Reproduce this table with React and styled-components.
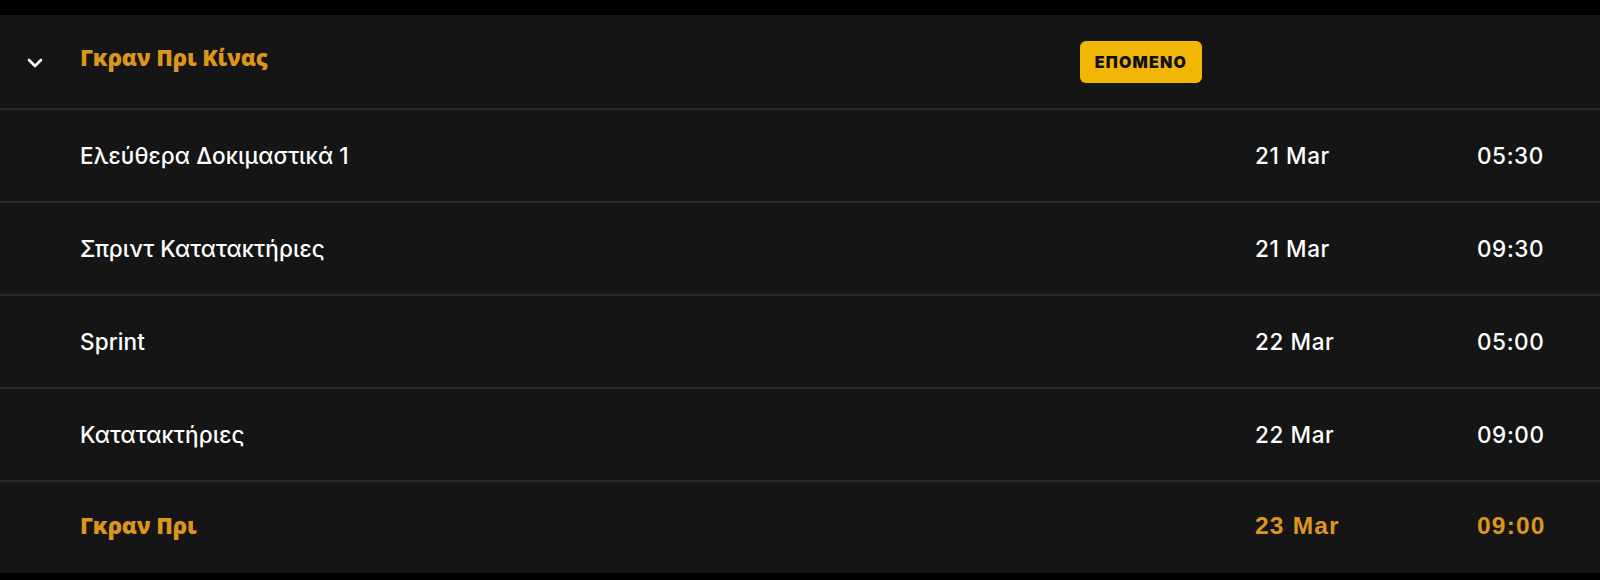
import React from 'react'
import styled, { createGlobalStyle } from 'styled-components'

const GlobalStyle = createGlobalStyle`
  html, body {
    margin: 0;
    padding: 0;
    background: #000;
  }
  body {
    font-family: Inter, "Noto Sans", sans-serif;
    -webkit-font-smoothing: antialiased;
  }
`

const sessions = [
  { name: 'Ελεύθερα Δοκιμαστικά 1', date: '21 Mar', time: '05:30' },
  { name: 'Σπριντ Κατατακτήριες', date: '21 Mar', time: '09:30' },
  { name: 'Sprint', date: '22 Mar', time: '05:00' },
  { name: 'Κατατακτήριες', date: '22 Mar', time: '09:00' },
  { name: 'Γκραν Πρι', date: '23 Mar', time: '09:00', main: true }
]

const Chevron = () => (
  <svg width="16" height="10" viewBox="0 0 16 10" fill="none">
    <polyline
      points="2,2 8,8 14,2"
      stroke="#fff"
      strokeWidth="2.6"
      strokeLinecap="round"
      strokeLinejoin="round"
    />
  </svg>
)

const App = () => {
  return (
    <Page>
      <GlobalStyle />
      <Panel>
        <Header>
          <Toggle>
            <Chevron />
          </Toggle>
          <Title>Γκραν Πρι Κίνας</Title>
          <Badge>ΕΠΟΜΕΝΟ</Badge>
        </Header>
        {sessions.map(s => (
          <Row key={s.name} main={s.main}>
            <Name main={s.main}>{s.name}</Name>
            <When main={s.main}>{s.date}</When>
            <When main={s.main}>{s.time}</When>
          </Row>
        ))}
      </Panel>
    </Page>
  )
}

export default App

const Page = styled.div`
  padding: 15px 0 8px;
  background: #000;
`

const Panel = styled.div`
  background: #151515;
`

const grid = `
  display: grid;
  grid-template-columns: 80px 1000px 175px 222px 1fr;
  align-items: center;
  box-sizing: border-box;
`

const Header = styled.div`
  ${grid}
  height: 95px;
  border-bottom: 2px solid #2a2a2a;
`

const Toggle = styled.div`
  display: flex;
  align-items: center;
  padding-left: 27px;
  padding-top: 2px;
`

const Title = styled.div`
  font-family: "Open Sans", "Noto Sans", sans-serif;
  font-weight: 800;
  font-size: 22.5px;
  color: #dc961c;
  letter-spacing: -0.2px;
  padding-bottom: 8px;
`

const Badge = styled.div`
  justify-self: start;
  width: 122px;
  height: 42px;
  border-radius: 6px;
  background: #f2b705;
  color: #111;
  display: flex;
  align-items: center;
  justify-content: center;
  font-family: Inter, "Noto Sans", sans-serif;
  font-weight: 900;
  font-size: 16px;
  letter-spacing: 1.2px;
  padding-top: 1px;
  box-sizing: border-box;
`

const Row = styled.div`
  ${grid}
  height: 93px;
  border-bottom: 2px solid #2a2a2a;
  padding-bottom: ${p => (p.main ? '4px' : '0')};
  &:last-child {
    border-bottom: none;
    height: 91px;
  }
`

const Name = styled.div`
  grid-column: 2 / 4;
  font-family: ${p => (p.main ? '"Open Sans", "Noto Sans", sans-serif' : 'Inter, "Noto Sans", sans-serif')};
  font-weight: ${p => (p.main ? 800 : 500)};
  font-size: 22.5px;
  color: ${p => (p.main ? '#dc961c' : '#fff')};
  letter-spacing: ${p => (p.main ? '-0.2px' : '0.1px')};
`

const When = styled.div`
  font-family: ${p => (p.main ? '"Liberation Sans", Arial, sans-serif' : 'Inter, "Noto Sans", sans-serif')};
  font-weight: ${p => (p.main ? 700 : 500)};
  font-size: ${p => (p.main ? '24.5px' : '22.5px')};
  color: ${p => (p.main ? '#dc961c' : '#fff')};
  letter-spacing: ${p => (p.main ? '1.2px' : '0.6px')};
`
